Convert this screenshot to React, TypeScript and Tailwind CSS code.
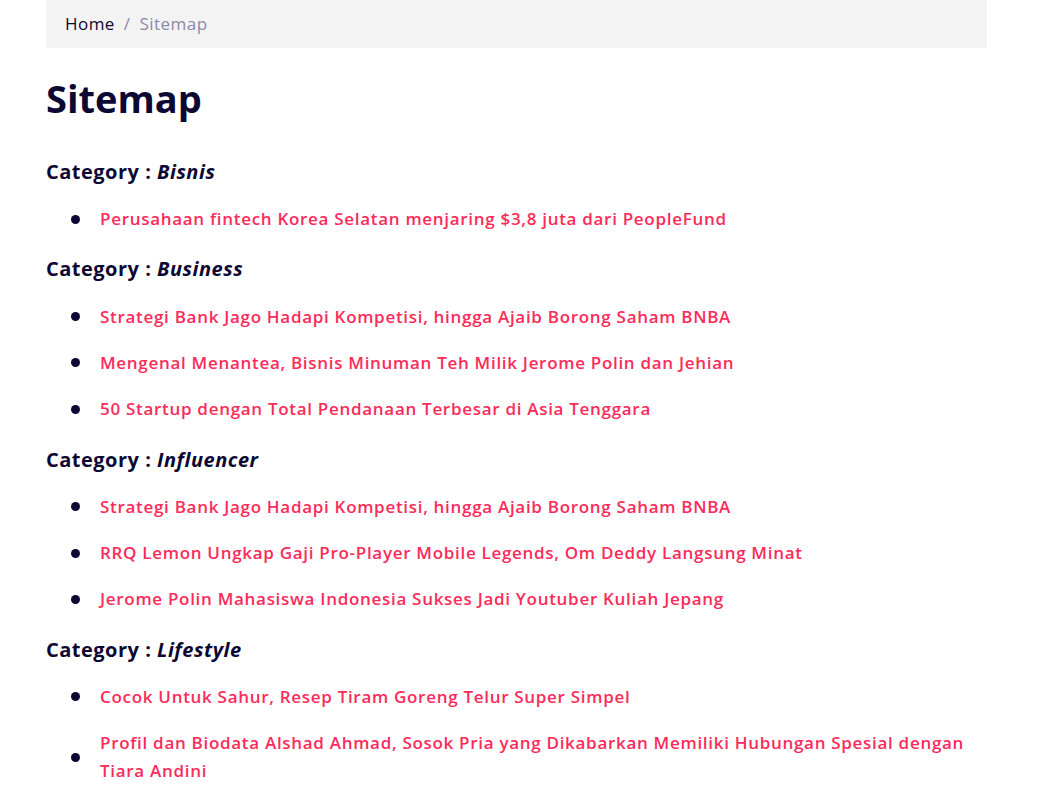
import React from "react";

const data: { cat: string; items: string[] }[] = [
  { cat: "Bisnis", items: ["Perusahaan fintech Korea Selatan menjaring $3,8 juta dari PeopleFund"] },
  {
    cat: "Business",
    items: [
      "Strategi Bank Jago Hadapi Kompetisi, hingga Ajaib Borong Saham BNBA",
      "Mengenal Menantea, Bisnis Minuman Teh Milik Jerome Polin dan Jehian",
      "50 Startup dengan Total Pendanaan Terbesar di Asia Tenggara",
    ],
  },
  {
    cat: "Influencer",
    items: [
      "Strategi Bank Jago Hadapi Kompetisi, hingga Ajaib Borong Saham BNBA",
      "RRQ Lemon Ungkap Gaji Pro-Player Mobile Legends, Om Deddy Langsung Minat",
      "Jerome Polin Mahasiswa Indonesia Sukses Jadi Youtuber Kuliah Jepang",
    ],
  },
  {
    cat: "Lifestyle",
    items: [
      "Cocok Untuk Sahur, Resep Tiram Goreng Telur Super Simpel",
      "Profil dan Biodata Alshad Ahmad, Sosok Pria yang Dikabarkan Memiliki Hubungan Spesial dengan Tiara Andini",
    ],
  },
];

export default function App() {
  return (
    <div className="min-h-screen bg-white font-['Open_Sans',sans-serif] text-[#0c0833]">
      <div className="mx-[46px] w-[941px]">
        <div className="flex h-[48px] items-center gap-[9px] bg-[#f3f3f4] px-[19px] text-[17px] tracking-[0.45px]">
          <span className="text-[#0c0833]">Home</span>
          <span className="text-[#8a89a6]">/</span>
          <span className="text-[#8a89a6]">Sitemap</span>
        </div>
        <h1 className="mt-[26px] text-[38px] font-bold leading-[48px]">Sitemap</h1>
        <div className="mt-[36px]">
          {data.map((g) => (
            <div key={g.cat} className="mb-[13px]">
              <h3 className="text-[20px] font-bold leading-[28px] tracking-[0.5px]">
                Category : <em className="font-bold italic">{g.cat}</em>
              </h3>
              <ul className="mt-[10px]">
                {g.items.map((it, i) => (
                  <li key={i} className="flex items-center py-[9.2px]">
                    <span className="ml-[25px] h-[9px] w-[9px] shrink-0 rounded-full bg-[#0c0833]" />
                    <a className="ml-[20px] text-[17px] font-semibold leading-[28px] tracking-[0.7px] text-[#fc2b5a]">{it}</a>
                  </li>
                ))}
              </ul>
            </div>
          ))}
        </div>
      </div>
    </div>
  );
}
